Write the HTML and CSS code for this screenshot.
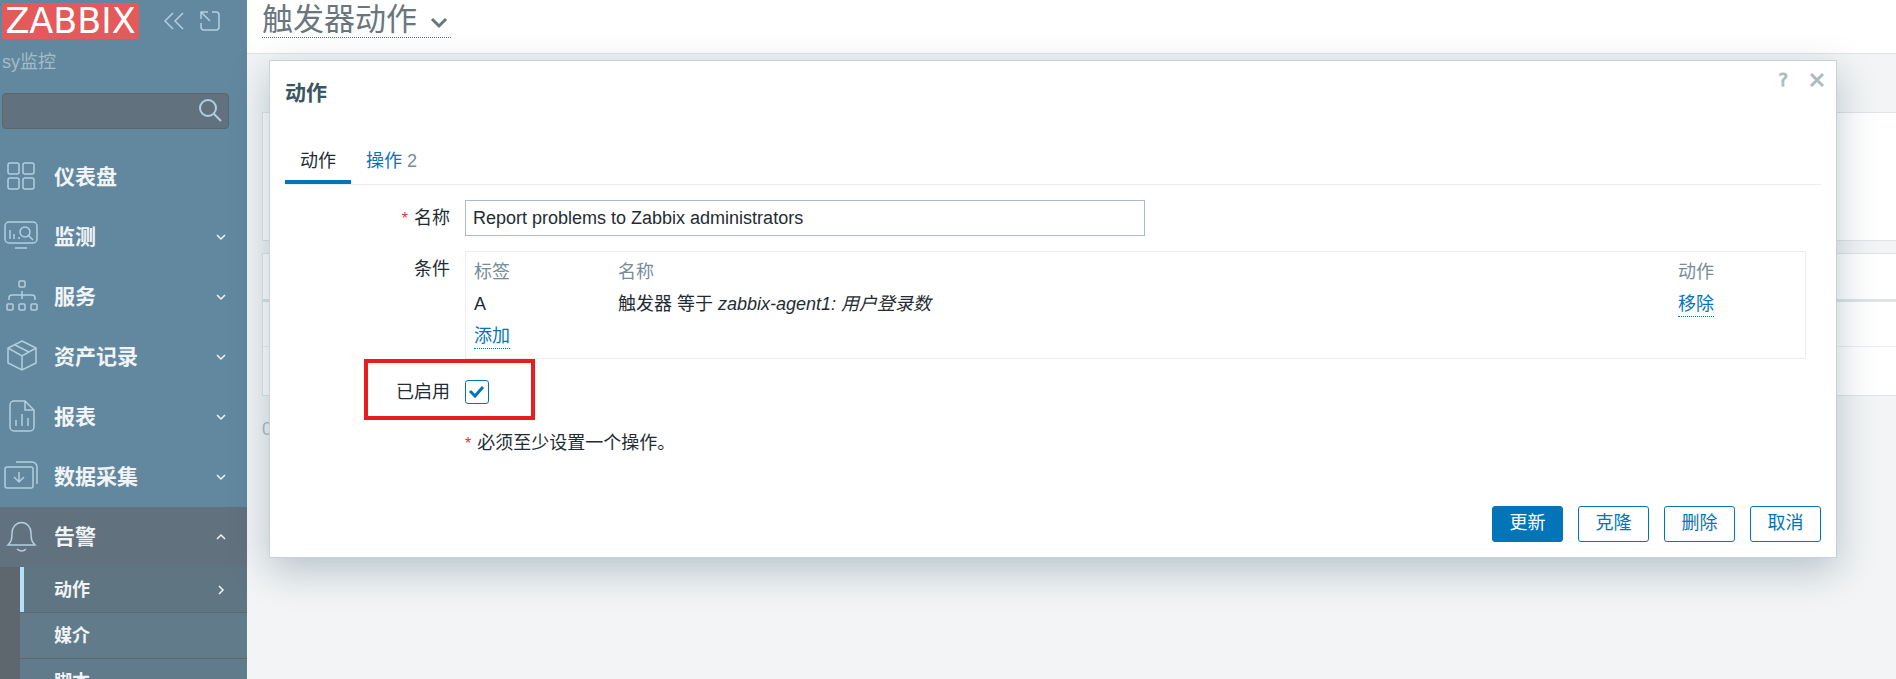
FILE: index.html
```html
<!DOCTYPE html>
<html lang="zh-CN">
<head>
    <meta charset="UTF-8">
    <meta name="viewport" content="width=device-width, initial-scale=1.0">
    <title>触发器动作</title>
    <link rel="stylesheet" href="styles.css">
</head>
<body>
    <aside class="sidebar">
        <div class="sidebar-header">
            <a class="logo" href="#">ZABBIX</a>
            <button class="icon-button" type="button" aria-label="收起">
                <svg width="22" height="22" viewBox="0 0 22 22"><path d="M10 3L2 11l8 8M20 3l-8 8 8 8"/></svg>
            </button>
            <button class="icon-button" type="button" aria-label="隐藏">
                <svg width="22" height="22" viewBox="0 0 22 22"><path d="M2 9V2h7M2 2l9 9M13 2h4a3 3 0 0 1 3 3v12a3 3 0 0 1-3 3H5a3 3 0 0 1-3-3v-4"/></svg>
            </button>
        </div>
        <div class="server-name">sy监控</div>
        <form class="search">
            <input type="text" aria-label="搜索">
            <button type="button" aria-label="搜索">
                <svg width="24" height="24" viewBox="0 0 24 24"><circle cx="10" cy="9" r="8"/><path d="M16 15l7 7"/></svg>
            </button>
        </form>
        <nav>
            <ul class="menu">
                <li>
                    <a href="#">
                        <svg class="menu-icon" width="36" height="36" viewBox="0 0 36 36"><rect x="5" y="4" width="11" height="11" rx="2"/><rect x="20" y="4" width="11" height="11" rx="2"/><rect x="5" y="19" width="11" height="11" rx="2"/><rect x="20" y="19" width="11" height="11" rx="2"/></svg>
                        <span>仪表盘</span>
                    </a>
                </li>
                <li>
                    <a href="#">
                        <svg class="menu-icon" width="36" height="36" viewBox="0 0 36 36"><rect x="2" y="3" width="32" height="21" rx="4"/><path d="M7 11v9M11 15v5M16 18v2M12 29h12M25 16l5 5"/><circle cx="22" cy="13" r="5"/></svg>
                        <span>监测</span>
                        <svg class="arrow" width="10" height="10" viewBox="0 0 10 10"><path d="M1 3l4 4 4-4"/></svg>
                    </a>
                </li>
                <li>
                    <a href="#">
                        <svg class="menu-icon" width="36" height="36" viewBox="0 0 36 36"><rect x="16" y="2" width="6" height="6" rx="1"/><rect x="4" y="25" width="6" height="6" rx="1"/><rect x="16" y="25" width="6" height="6" rx="1"/><rect x="28" y="25" width="6" height="6" rx="1"/><path d="M19 12v8M6 21v-2a3 3 0 0 1 3-3h20a3 3 0 0 1 3 3v2"/></svg>
                        <span>服务</span>
                        <svg class="arrow" width="10" height="10" viewBox="0 0 10 10"><path d="M1 3l4 4 4-4"/></svg>
                    </a>
                </li>
                <li>
                    <a href="#">
                        <svg class="menu-icon" width="36" height="36" viewBox="0 0 36 36"><path d="M19 2l14 7v15l-14 7-14-7V9zM5 9l14 8 14-8M19 17v14M12 6l14 7"/></svg>
                        <span>资产记录</span>
                        <svg class="arrow" width="10" height="10" viewBox="0 0 10 10"><path d="M1 3l4 4 4-4"/></svg>
                    </a>
                </li>
                <li>
                    <a href="#">
                        <svg class="menu-icon" width="36" height="36" viewBox="0 0 36 36"><path d="M22 2H11a4 4 0 0 0-4 4v22a4 4 0 0 0 4 4h16a4 4 0 0 0 4-4V11zM22 2v9h9M13 21v6M19 15v12M25 19v8"/></svg>
                        <span>报表</span>
                        <svg class="arrow" width="10" height="10" viewBox="0 0 10 10"><path d="M1 3l4 4 4-4"/></svg>
                    </a>
                </li>
                <li>
                    <a href="#">
                        <svg class="menu-icon" width="36" height="36" viewBox="0 0 36 36"><rect x="2" y="8" width="28" height="21" rx="2"/><path d="M13 3h16a5 5 0 0 1 5 5v17M16 13v10M11 18l5 5 5-5"/></svg>
                        <span>数据采集</span>
                        <svg class="arrow" width="10" height="10" viewBox="0 0 10 10"><path d="M1 3l4 4 4-4"/></svg>
                    </a>
                </li>
                <li class="open">
                    <a href="#">
                        <svg class="menu-icon" width="36" height="36" viewBox="0 0 36 36"><path d="M5 26c3-3 4-5 4-12a9 10 0 0 1 19 0c0 7 1 9 4 12zM14 30q5 4 9 0"/></svg>
                        <span>告警</span>
                        <svg class="arrow" width="10" height="10" viewBox="0 0 10 10"><path d="M1 7l4-4 4 4"/></svg>
                    </a>
                    <ul class="submenu">
                        <li class="selected">
                            <a href="#">
                                <span>动作</span>
                                <svg class="arrow" width="10" height="10" viewBox="0 0 10 10"><path d="M3 1l4 4-4 4"/></svg>
                            </a>
                        </li>
                        <li><a href="#"><span>媒介</span></a></li>
                        <li><a href="#"><span>脚本</span></a></li>
                    </ul>
                </li>
            </ul>
        </nav>
    </aside>

    <div class="wrapper">
        <header class="page-header">
            <h1>
                <button class="page-title" type="button">触发器动作
                    <svg width="18" height="14" viewBox="0 0 18 14"><path d="M2 3l7 7 7-7"/></svg>
                </button>
            </h1>
        </header>
        <main>
            <div class="filter"></div>
            <div class="list">
                <div class="list-head"></div>
                <div class="list-row"></div>
                <div class="list-row"></div>
            </div>
            <div class="selected-count">0 选择</div>
        </main>

        <div class="modal" role="dialog" aria-labelledby="modalTitle">
            <div class="modal-header">
                <h2 id="modalTitle">动作</h2>
                <div class="modal-controls">
                    <a class="help" href="#">?</a>
                    <button class="close" type="button" aria-label="关闭">
                        <svg width="16" height="16" viewBox="0 0 16 16"><path d="M2 2l12 12M14 2L2 14"/></svg>
                    </button>
                </div>
            </div>
            <div class="tabs">
                <a class="active" href="#">动作</a>
                <a href="#">操作 <span>2</span></a>
            </div>
            <form class="form">
                <div class="form-row">
                    <label class="required" for="name">名称</label>
                    <input class="text" type="text" id="name" value="Report problems to Zabbix administrators">
                </div>
                <div class="form-row">
                    <span class="label">条件</span>
                    <div class="conditions">
                        <table>
                            <thead>
                                <tr>
                                    <th class="col-tag">标签</th>
                                    <th>名称</th>
                                    <th class="col-action">动作</th>
                                </tr>
                            </thead>
                            <tbody>
                                <tr>
                                    <td>A</td>
                                    <td>触发器 等于 <em>zabbix-agent1: 用户登录数</em></td>
                                    <td><button class="link" type="button">移除</button></td>
                                </tr>
                                <tr>
                                    <td colspan="3"><button class="link" type="button">添加</button></td>
                                </tr>
                            </tbody>
                        </table>
                    </div>
                </div>
                <div class="form-row highlighted">
                    <label for="enabled">已启用</label>
                    <input class="checkbox" type="checkbox" id="enabled" checked>
                </div>
                <div class="form-row">
                    <p class="note required">必须至少设置一个操作。</p>
                </div>
                <div class="modal-footer">
                    <button class="primary" type="button">更新</button>
                    <button type="button">克隆</button>
                    <button type="button">删除</button>
                    <button type="button">取消</button>
                </div>
            </form>
        </div>
    </div>
</body>
</html>
```
FILE: styles.css
```css
*, *::before, *::after {
    box-sizing: border-box;
}
body {
    display: flex;
    margin: 0;
    height: 100vh;
    overflow: hidden;
    background-color: #f2f4f5;
    color: #1f2c33;
    font-family: "Liberation Sans", "Noto Sans CJK SC", sans-serif;
    font-size: 18px;
    line-height: 24px;
}
h1, h2, p, ul {
    margin: 0;
    padding: 0;
}
ul {
    list-style: none;
}
a {
    color: #0275b8;
    text-decoration: none;
}
button, input {
    font: inherit;
}
button {
    cursor: pointer;
}
svg {
    display: block;
    fill: none;
    stroke: currentColor;
}

/* Sidebar */
.sidebar {
    flex: none;
    width: 247px;
    overflow: hidden;
    background-color: #62889f;
}
.sidebar-header {
    display: flex;
    align-items: flex-start;
    gap: 14px;
    padding: 3px 2px 0;
}
.logo {
    width: 137px;
    height: 36px;
    margin-right: 10px;
    background-color: #e45959;
    color: #fff;
    font-family: "DejaVu Sans", sans-serif;
    font-size: 35px;
    line-height: 36px;
    text-align: center;
}
.icon-button {
    margin-top: 7px;
    padding: 0;
    border: 0;
    background: none;
    color: #b2cfe0;
}
.icon-button svg {
    stroke-width: 1.5;
}
.server-name {
    padding: 11px 2px 19px;
    color: #a3bccb;
}
.search {
    display: flex;
    align-items: center;
    width: 227px;
    height: 36px;
    margin-left: 2px;
    padding-right: 6px;
    border: 1px solid #5a666e;
    border-radius: 4px;
    background-color: #61727e;
}
.search input {
    flex: 1;
    min-width: 0;
    border: 0;
    outline: 0;
    background: none;
    color: #fff;
}
.search button {
    padding: 0;
    border: 0;
    background: none;
    color: #b2cfe0;
}
.search svg {
    stroke-width: 2;
}
.menu {
    margin-top: 18px;
}
.menu a {
    display: flex;
    align-items: center;
    height: 60px;
    padding: 0 21px 0 3px;
    color: #f0f4f7;
    font-size: 21px;
    font-weight: 700;
}
.menu-icon {
    width: 36px;
    margin-right: 15px;
    color: #b2cfe0;
    stroke-width: 1.5;
}
.arrow {
    margin-left: auto;
    stroke-width: 1.5;
}
.menu .open {
    background-color: #61717d;
}
.submenu {
    border-left: 20px solid #5d676d;
}
.submenu li {
    border-bottom: 1px solid #5d676d;
    background-color: #627b8b;
}
.submenu .selected {
    background-color: #607582;
}
.submenu a {
    height: 45px;
    padding: 0 21px 0 30px;
    border-left: 4px solid transparent;
    font-size: 18px;
}
.submenu .selected a {
    border-left-color: #b3e0ff;
}

/* Page */
.wrapper {
    position: relative;
    flex: 1;
    min-width: 0;
}
.page-header {
    height: 54px;
    padding-left: 15px;
    border-bottom: 1px solid #dfe4e7;
    background-color: #fff;
}
.page-title {
    display: flex;
    align-items: center;
    gap: 13px;
    height: 38px;
    padding: 2px 3px 0 0;
    border: 0;
    border-bottom: 1px dotted #5f6f79;
    background: none;
    color: #6a767d;
    font-size: 31px;
    line-height: 36px;
    font-weight: 400;
}
.page-title svg {
    margin-top: 6px;
    stroke-width: 3;
}
main {
    padding: 58px 0 0 15px;
}
.filter {
    height: 129px;
    border: 1px solid #dfe4e7;
    border-right: 0;
    background-color: #fff;
}
.list {
    margin-top: 12px;
    border: 1px solid #dfe4e7;
    border-right: 0;
    background-color: #fff;
}
.list-head {
    height: 48px;
    border-bottom: 3px solid #dfe4e7;
}
.list-row {
    height: 44px;
}
.list-row + .list-row {
    height: 49px;
    border-top: 1px solid #ebeef0;
}
.selected-count {
    margin-top: 21px;
    color: #acbbc2;
}

/* Dialog */
.modal {
    position: absolute;
    top: 60px;
    left: 22px;
    right: 59px;
    padding: 15px;
    border: 1px solid #c8d3d9;
    background-color: #fff;
    box-shadow: 0 12px 36px rgba(0, 51, 76, 0.25);
}
.modal-header {
    display: flex;
    justify-content: space-between;
    height: 62px;
}
.modal-header h2 {
    padding-top: 5px;
    color: #3c5563;
    font-size: 21px;
    font-weight: 700;
}
.modal-controls {
    display: flex;
    align-items: center;
    gap: 21px;
    height: 24px;
    margin: -8px -4px 0 0;
}
.help {
    color: #acbbc2;
    font-family: "DejaVu Sans", sans-serif;
    -webkit-text-stroke: 1px #acbbc2;
}
.close {
    padding: 0;
    border: 0;
    background: none;
    color: #acbbc2;
}
.close svg {
    stroke-width: 3;
}
.tabs {
    display: flex;
    border-bottom: 1px solid #ebeef0;
}
.tabs a {
    height: 46px;
    padding: 11px 15px 0;
    border-bottom: 4px solid transparent;
}
.tabs .active {
    border-bottom-color: #0275b8;
    color: #1f2c33;
}
.tabs span {
    color: #768d99;
}
.form {
    display: flex;
    flex-direction: column;
    gap: 15px;
    padding-top: 15px;
}
.form-row {
    display: grid;
    grid-template-columns: 165px 1fr;
    column-gap: 15px;
    padding-right: 15px;
}
.form-row label,
.form-row .label {
    line-height: 36px;
    text-align: right;
}
.required::before {
    content: "*";
    margin-right: 6px;
    color: #e33734;
    font-size: 16px;
    line-height: 16px;
}
.text {
    width: 680px;
    max-width: 100%;
    height: 36px;
    padding: 0 7px;
    border: 1px solid #acbbc2;
    color: #1f2c33;
}
.conditions {
    padding: 4px 0 6px;
    border: 1px solid #ebeef0;
}
.conditions table {
    width: 100%;
    border-collapse: collapse;
}
.conditions th,
.conditions td {
    height: 32px;
    padding: 0 8px;
    text-align: left;
}
.conditions th {
    color: #768d99;
    font-weight: 400;
}
.col-tag {
    width: 144px;
}
.col-action {
    width: 135px;
}
.link {
    padding: 0;
    border: 0;
    border-bottom: 1px dotted #0275b8;
    background: none;
    color: #0275b8;
}
.highlighted {
    position: relative;
    align-items: center;
}
.highlighted::after {
    content: "";
    position: absolute;
    top: -15px;
    left: 79px;
    width: 171px;
    height: 61px;
    border: 4px solid #eb1c1e;
}
.checkbox {
    appearance: none;
    width: 24px;
    height: 24px;
    margin: 0;
    border: 1px solid #0275b8;
    border-radius: 3px;
    background: url("data:image/svg+xml,%3Csvg xmlns='http://www.w3.org/2000/svg' viewBox='0 0 22 22'%3E%3Cpath d='M4 10l5 5 8-9' fill='none' stroke='%230275b8' stroke-width='3'/%3E%3C/svg%3E") center no-repeat;
}
.note {
    grid-column: 2;
    line-height: 36px;
}
.modal-footer {
    display: flex;
    justify-content: flex-end;
    gap: 15px;
    margin-top: 30px;
}
.modal-footer button {
    min-width: 71px;
    height: 36px;
    padding: 0 16px 2px;
    border: 1px solid #0275b8;
    border-radius: 3px;
    background-color: #fff;
    color: #0275b8;
}
.modal-footer .primary {
    background-color: #0275b8;
    color: #fff;
}
```
